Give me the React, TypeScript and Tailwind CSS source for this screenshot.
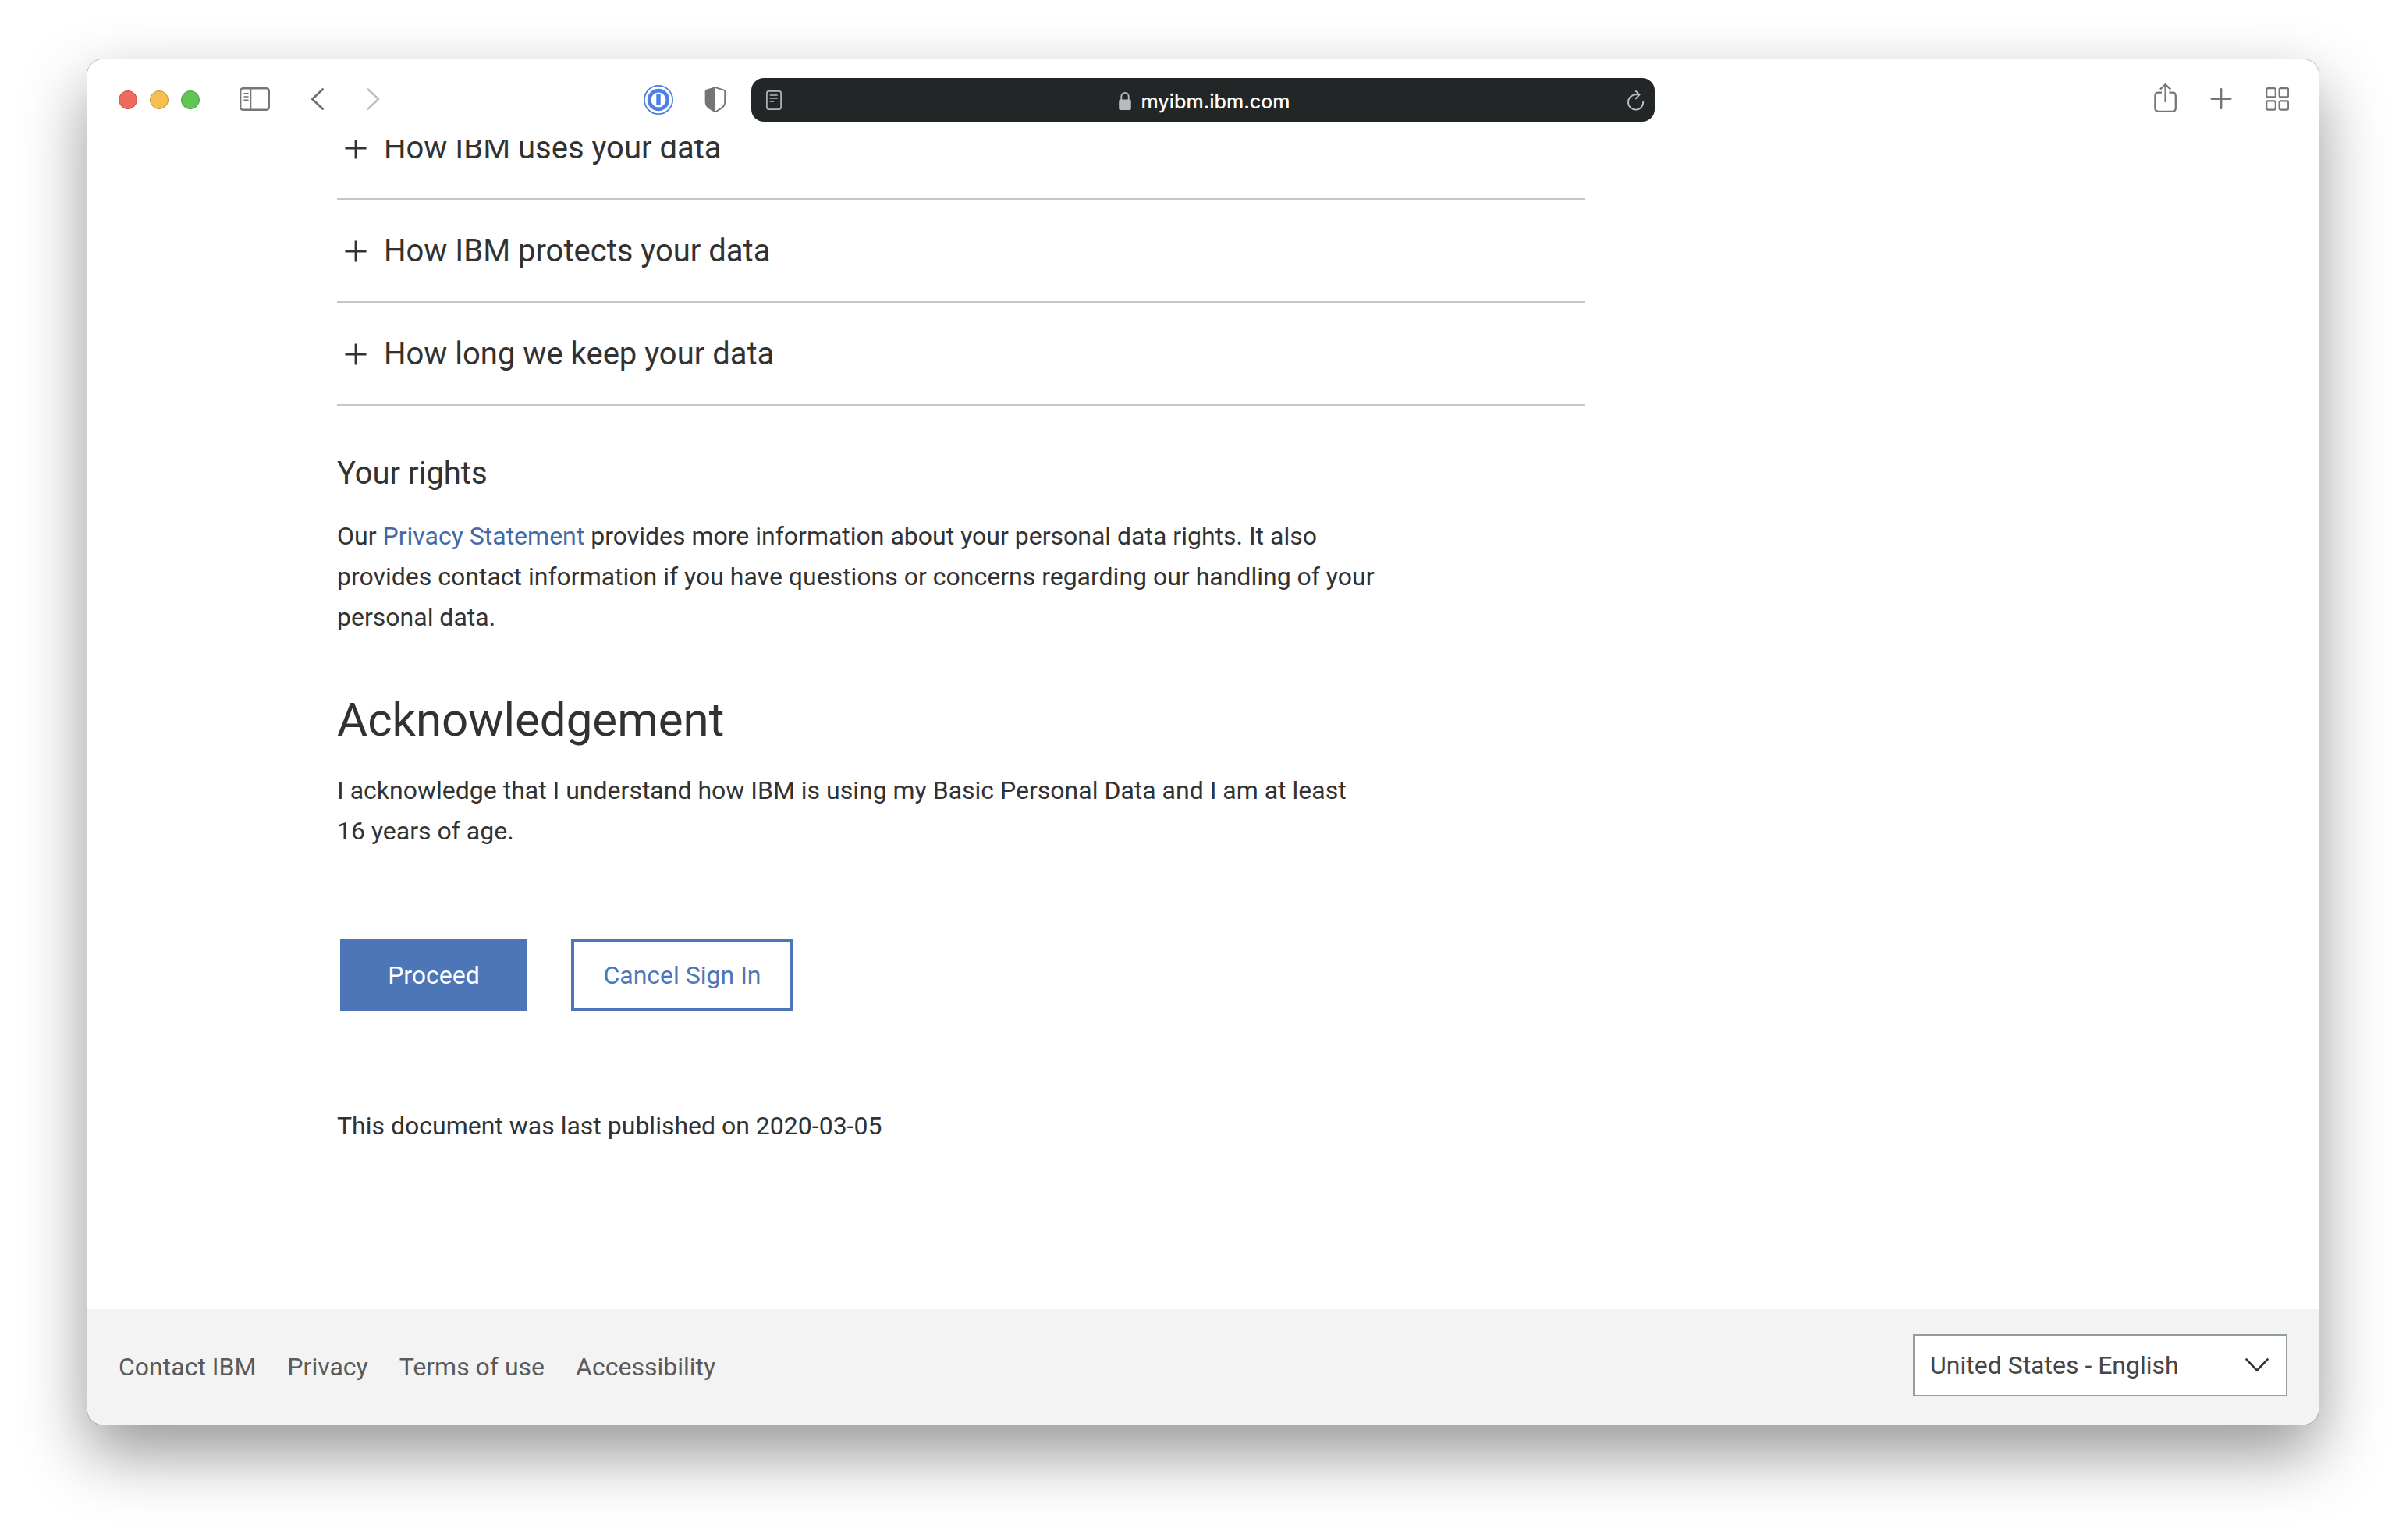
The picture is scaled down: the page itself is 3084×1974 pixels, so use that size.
import type { ReactNode } from "react";

const sections = ["How IBM uses your data", "How IBM protects your data", "How long we keep your data"];
const footerLinks = ["Contact IBM", "Privacy", "Terms of use", "Accessibility"];

function ToolButton({ label, children }: { label: string; children: ReactNode }) {
  return (
    <button type="button" aria-label={label} className="shrink-0">
      {children}
    </button>
  );
}

function TrafficLights() {
  return (
    <div className="flex gap-4">
      <button type="button" aria-label="Close" className="size-6 rounded-full border border-[#c9483f] bg-[#ec6a5e]" />
      <button type="button" aria-label="Minimize" className="size-6 rounded-full border border-[#c0953a] bg-[#f4bf4f]" />
      <button type="button" aria-label="Zoom" className="size-6 rounded-full border border-[#469b3c] bg-[#61c554]" />
    </div>
  );
}

function SidebarIcon() {
  return (
    <svg width="40" height="32" viewBox="0 0 40 32" fill="none" stroke="#767676" strokeLinecap="round">
      <rect x="2.2" y="1.2" width="36.6" height="27.6" rx="3.4" strokeWidth="2.4" />
      <path d="M15.2 1.5V28.5" strokeWidth="2.2" />
      <path d="M7 7.7H12M7 12H12M7 16.3H12" strokeWidth="1.6" />
    </svg>
  );
}

function BackIcon() {
  return (
    <svg width="22" height="32" viewBox="0 0 22 32" fill="none" stroke="#6f6f6f" strokeWidth="2.8" strokeLinecap="round" strokeLinejoin="round">
      <path d="M17.6 2.4L4.4 15L17.6 27.6" />
    </svg>
  );
}

function ForwardIcon() {
  return (
    <svg width="22" height="32" viewBox="0 0 22 32" fill="none" stroke="#c1c1c1" strokeWidth="2.8" strokeLinecap="round" strokeLinejoin="round">
      <path d="M3.8 2.4L17 15L3.8 27.6" />
    </svg>
  );
}

function KeyholeIcon() {
  return (
    <svg width="38" height="38" viewBox="0 0 38 38" fill="none" stroke="#4f7ee6">
      <circle cx="19" cy="19" r="18.1" strokeWidth="1.8" />
      <circle cx="19" cy="19" r="11.8" strokeWidth="4.8" />
      <path d="M19 12V26" strokeWidth="5.4" />
    </svg>
  );
}

function ShieldIcon() {
  return (
    <svg width="28" height="34" viewBox="0 0 28 34">
      <path
        d="M14 1.1L25.1 4.6Q26.2 5 26.2 6.2V20.6C26.2 25.6 21.4 28 14 32.4C6.6 28 1.6 25.6 1.6 20.6V6.2Q1.6 5 2.7 4.6Z"
        fill="none"
        stroke="#757575"
        strokeWidth="1.9"
        strokeLinejoin="round"
      />
      <path d="M14 1L2.4 4.6Q1.4 5 1.4 6.2V20.6C1.4 25.6 6.6 28 14 32.4Z" fill="#757575" />
    </svg>
  );
}

function ReaderIcon() {
  return (
    <svg width="32" height="32" viewBox="0 0 32 32" fill="none" stroke="#b5b8b8">
      <rect x="7.9" y="2.9" width="18.2" height="23.2" rx="2.6" strokeWidth="1.7" />
      <path d="M11.7 8H21.7M11.7 12H21.7M11.7 16H17.2" strokeWidth="1.7" />
    </svg>
  );
}

function LockIcon() {
  return (
    <svg width="16" height="32" viewBox="0 0 16 32" aria-hidden="true">
      <path d="M3.3 15V10C3.3 3.2 12.7 3.2 12.7 10V15" fill="none" stroke="#b9bcbc" strokeWidth="1.9" />
      <rect x="0.2" y="13.5" width="15.6" height="13.5" rx="2" fill="#b9bcbc" />
    </svg>
  );
}

function ReloadIcon() {
  return (
    <svg width="32" height="32" viewBox="0 0 32 32" fill="none" stroke="#b9bcbc" strokeWidth="1.9" strokeLinecap="round" strokeLinejoin="round">
      <path d="M29.2 16.6A9.6 9.6 0 1 1 19.6 7.4H24" />
      <path d="M19.8 3L24.6 7.4L19.8 12.4" />
    </svg>
  );
}

function ShareIcon() {
  return (
    <svg width="30" height="42" viewBox="0 0 30 42" fill="none" stroke="#767676" strokeWidth="2.3" strokeLinecap="round" strokeLinejoin="round">
      <path d="M11 11.7H6.6Q2.4 11.7 2.4 15.9V31.6Q2.4 35.8 6.6 35.8H24.6Q28.8 35.8 28.8 31.6V15.9Q28.8 11.7 24.6 11.7H20.4" strokeLinecap="butt" />
      <path d="M15.6 1.4V23.2" />
      <path d="M9.6 6.9L15.6 1.4L21.6 6.9" />
    </svg>
  );
}

function NewTabIcon() {
  return (
    <svg width="28" height="42" viewBox="0 0 28 42" fill="none" stroke="#767676" strokeWidth="2.8" strokeLinecap="round">
      <path d="M14 7.4V31.8M1.8 19.6H26.2" />
    </svg>
  );
}

function TabOverviewIcon() {
  return (
    <svg width="30" height="42" viewBox="0 0 30 42" fill="none" stroke="#767676" strokeWidth="2.2">
      <rect x="1.2" y="6.2" width="11.6" height="11.2" rx="2" />
      <rect x="17.6" y="6.2" width="11.6" height="11.2" rx="2" />
      <rect x="1.2" y="22.4" width="11.6" height="11.2" rx="2" />
      <rect x="17.6" y="22.4" width="11.6" height="11.2" rx="2" />
    </svg>
  );
}

function Toolbar() {
  return (
    <header className="relative z-10 grid h-[104px] grid-cols-[1fr_minmax(0,1158px)_1fr] items-center bg-white">
      <div className="flex items-center gap-[50px] pr-8 pl-10">
        <TrafficLights />
        <ToolButton label="Show sidebar">
          <SidebarIcon />
        </ToolButton>
        <ToolButton label="Back">
          <BackIcon />
        </ToolButton>
        <ToolButton label="Forward">
          <ForwardIcon />
        </ToolButton>
        <div className="ml-auto flex items-center gap-10">
          <ToolButton label="Password manager">
            <KeyholeIcon />
          </ToolButton>
          <ToolButton label="Privacy report">
            <ShieldIcon />
          </ToolButton>
        </div>
      </div>
      <div className="flex h-14 items-center justify-between rounded-2xl bg-[#232627] px-3 pt-1">
        <ToolButton label="Show reader">
          <ReaderIcon />
        </ToolButton>
        <div className="flex items-center gap-3 pl-1">
          <LockIcon />
          <span className="font-[Inter,sans-serif] text-[25px] leading-8 font-medium text-white">myibm.ibm.com</span>
        </div>
        <ToolButton label="Reload">
          <ReloadIcon />
        </ToolButton>
      </div>
      <div className="flex items-center justify-end gap-[43px] pr-[38px]">
        <ToolButton label="Share">
          <ShareIcon />
        </ToolButton>
        <ToolButton label="New tab">
          <NewTabIcon />
        </ToolButton>
        <ToolButton label="Tab overview">
          <TabOverviewIcon />
        </ToolButton>
      </div>
    </header>
  );
}

function AccordionRow({ title }: { title: string }) {
  return (
    <li className="h-[132px] border-b-2 border-[#c6c6c6]">
      <button type="button" aria-expanded="false" className="flex h-full w-full items-center gap-[22px] pt-[2px] pl-[10px] text-left text-[40px] leading-[52px]">
        <svg width="28" height="28" viewBox="0 0 28 28" fill="none" stroke="#323232" strokeWidth="2.8" aria-hidden="true">
          <path d="M14 0.5V27.5M0.5 14H27.5" />
        </svg>
        {title}
      </button>
    </li>
  );
}

export default function App() {
  return (
    <div className="flex min-h-screen flex-col bg-white px-[112px] pt-[76px] pb-[148px] font-[Roboto,sans-serif]">
      <div className="flex flex-1 flex-col overflow-hidden rounded-[20px] bg-white text-[32px] leading-[52px] text-[#323232] shadow-[0_0_0_1px_rgba(0,0,0,0.22),0_36px_84px_rgba(0,0,0,0.42)]">
        <Toolbar />
        <main className="flex-1 overflow-hidden px-[320px]">
          <div className="-mt-14 max-w-[1600px]">
            <ul>
              {sections.map((title) => (
                <AccordionRow key={title} title={title} />
              ))}
            </ul>
            <h3 className="mt-[61px] text-[40px] leading-[52px]">Your rights</h3>
            <p className="mt-7 max-w-[1334px]">
              Our{" "}
              <a href="#privacy-statement" className="text-[#4169a8]">
                Privacy Statement
              </a>{" "}
              provides more information about your personal data rights. It also provides contact information if you have questions or concerns
              regarding our handling of your personal data.
            </p>
            <h2 className="mt-[70px] text-[60px] leading-[72px]">Acknowledgement</h2>
            <p className="mt-7 max-w-[1334px]">
              I acknowledge that I understand how IBM is using my Basic Personal Data and I am at least 16 years of age.
            </p>
            <div className="mt-28 flex gap-14 px-1 pt-px">
              <button type="button" className="h-[92px] w-[240px] bg-[#4d76b9] text-white">
                Proceed
              </button>
              <button type="button" className="h-[92px] w-[285px] border-4 border-[#4d76b9] text-[#4d76b9]">
                Cancel Sign In
              </button>
            </div>
            <p className="mt-[121px]">This document was last published on 2020-03-05</p>
          </div>
        </main>
        <footer className="flex items-start justify-between bg-[#f3f3f3] px-10 py-8">
          <nav aria-label="Footer" className="flex h-[84px] items-center gap-10 text-[#5a5a5a]">
            {footerLinks.map((label) => (
              <a key={label} href="#footer">
                {label}
              </a>
            ))}
          </nav>
          <div className="relative w-[480px]">
            <select aria-label="Country and language" className="h-20 w-full appearance-none border-2 border-[#959e9e] bg-white pr-16 pl-5 text-[#464646]">
              <option>United States - English</option>
            </select>
            <svg
              className="pointer-events-none absolute inset-y-0 right-6 my-auto"
              width="30"
              height="18"
              viewBox="0 0 30 18"
              fill="none"
              stroke="#323232"
              strokeWidth="2.8"
              strokeLinecap="round"
              aria-hidden="true"
            >
              <path d="M1.6 1.6L15 15.6L28.4 1.6" />
            </svg>
          </div>
        </footer>
      </div>
    </div>
  );
}
